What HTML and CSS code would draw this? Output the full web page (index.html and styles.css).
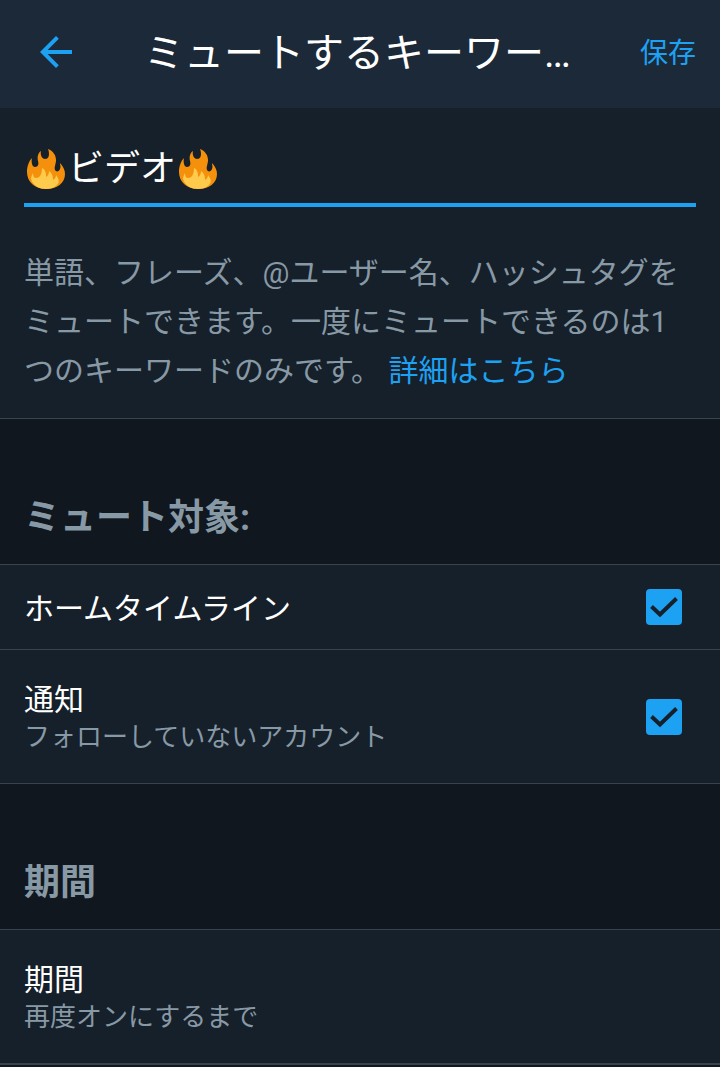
FILE: index.html
```
<!DOCTYPE html>
<html lang="ja">
<head>
    <meta charset="UTF-8">
    <meta name="viewport" content="width=device-width, initial-scale=1.0">
    <title>ミュートするキーワード</title>
    <link rel="stylesheet" href="styles.css">
</head>
<body>
    <!-- flame shape shared by both ends of the keyword field -->
    <svg class="sprite" aria-hidden="true">
        <symbol id="flame" viewBox="0 0 40 42">
            <path fill="#f5900c" d="M22 1c5 2 8 6 8 11 0 4-2 7-1 10 1 2 4 2 5-1 1-2 0-4 0-6 3 3 5 7 5 11 0 9-8 15-19 15S1 34 1 24c0-6 2-11 5-14-1 4 0 9 3 9 3 0 4-3 3-6-1-4 0-8 3-10-1 4 1 8 4 8 4 0 5-5 3-10z"/>
            <path fill="#ffcb4c" d="M16 20c4 2 4 6 4 9 2-1 3-3 3-6 3 2 4 5 4 9 2-1 3-3 3-5 3 4 4 7 1 10-3 3-7 4-11 4-6 0-13-3-15-10 0-2 1-4 2-6 0 3 1 5 3 5 5 0 6-6 6-10z"/>
        </symbol>
    </svg>

    <header class="topbar">
        <button class="back-button" type="button" aria-label="戻る">
            <svg viewBox="4 4 16 16" width="32" height="32">
                <path fill="currentColor" d="M20 11H7.83l5.59-5.59L12 4l-8 8 8 8 1.41-1.41L7.83 13H20v-2z"/>
            </svg>
        </button>
        <h1 class="title">ミュートするキーワー…</h1>
        <button class="save-button" type="submit">保存</button>
    </header>

    <main>
        <section class="keyword">
            <div class="keyword-field">
                <svg class="flame"><use href="#flame"/></svg>
                <input class="keyword-input" type="text" value="ビデオ" aria-label="キーワード">
                <svg class="flame"><use href="#flame"/></svg>
            </div>
            <p class="help">単語、フレーズ、@ユーザー名、ハッシュタグをミュートできます。一度にミュートできるのは1つのキーワードのみです。 <a href="#">詳細はこちら</a></p>
        </section>

        <h2 class="section-title">ミュート対象:</h2>
        <label class="row row-single">
            <span class="row-text">
                <span class="row-title">ホームタイムライン</span>
            </span>
            <input class="checkbox" type="checkbox" checked>
        </label>
        <label class="row">
            <span class="row-text">
                <span class="row-title">通知</span>
                <span class="row-sub">フォローしていないアカウント</span>
            </span>
            <input class="checkbox" type="checkbox" checked>
        </label>

        <h2 class="section-title">期間</h2>
        <button class="row row-last" type="button">
            <span class="row-text">
                <span class="row-title">期間</span>
                <span class="row-sub">再度オンにするまで</span>
            </span>
        </button>
    </main>
</body>
</html>
```

FILE: styles.css
```
* {
    box-sizing: border-box;
}

body {
    margin: 0;
    background-color: #10171e;
    color: #fff;
    font-family: Roboto, "Noto Sans CJK JP", sans-serif;
}

button,
input {
    font-family: inherit;
    color: inherit;
    background: none;
    border: none;
    margin: 0;
    padding: 0;
}

button {
    cursor: pointer;
}

.sprite {
    display: none;
}

/* top bar */
.topbar {
    display: flex;
    align-items: center;
    height: 108px;
    padding: 0 24px 0 40px;
    background-color: #1c2938;
}

.back-button {
    display: flex;
    padding-bottom: 4px;
    color: #1da1f2;
}

.title {
    flex: 1;
    min-width: 0;
    margin: 0 24px 0 72px;
    font-size: 40px;
    font-weight: 400;
    line-height: 60px;
    white-space: nowrap;
    overflow: hidden;
    text-overflow: ellipsis;
}

.save-button {
    color: #1da1f2;
    font-size: 28px;
    line-height: 40px;
}

/* keyword field */
.keyword {
    padding: 28px 24px 23px;
    background-color: #16202a;
    border-bottom: 1px solid #38444d;
}

.keyword-field {
    display: flex;
    align-items: center;
    height: 71px;
    padding: 0 2px 2px;
    border-bottom: 4px solid #1da1f2;
}

.flame {
    width: 40px;
    height: 42px;
}

.keyword-input {
    width: 112px;
    padding-left: 2px;
    font-size: 36px;
    line-height: 52px;
    outline: none;
}

.help {
    margin: 41px 0 0;
    color: #8899a6;
    font-size: 30px;
    line-height: 49px;
}

.help a {
    color: #1da1f2;
    text-decoration: none;
}

/* setting rows */
.section-title {
    margin: 0;
    padding: 73px 24px 20px;
    color: #8899a6;
    font-size: 36px;
    font-weight: 700;
    line-height: 52px;
    border-bottom: 1px solid #38444d;
}

.row {
    display: flex;
    align-items: center;
    width: 100%;
    min-height: 134px;
    padding: 0 38px 0 24px;
    background-color: #16202a;
    border-bottom: 1px solid #38444d;
    text-align: left;
}

.row-single {
    min-height: 85px;
}

.row-last {
    min-height: 135px;
    border-bottom-width: 2px;
}

.row-text {
    flex: 1;
    padding-top: 3px;
}

.row-title {
    display: block;
    font-size: 30px;
    line-height: 38px;
}

.row-sub {
    display: block;
    color: #8899a6;
    font-size: 26px;
    line-height: 36px;
}

.checkbox {
    appearance: none;
    width: 36px;
    height: 36px;
    border-radius: 4px;
    border: 2px solid #8899a6;
}

.checkbox:checked {
    border: none;
    background: #1da1f2 url("data:image/svg+xml,%3Csvg xmlns='http://www.w3.org/2000/svg' viewBox='0 0 36 36'%3E%3Cpath d='M5.5 17.5l8.500 8L30.500 9.500' fill='none' stroke='%2316202a' stroke-width='4'/%3E%3C/svg%3E") center / 36px 36px no-repeat;
}
```
